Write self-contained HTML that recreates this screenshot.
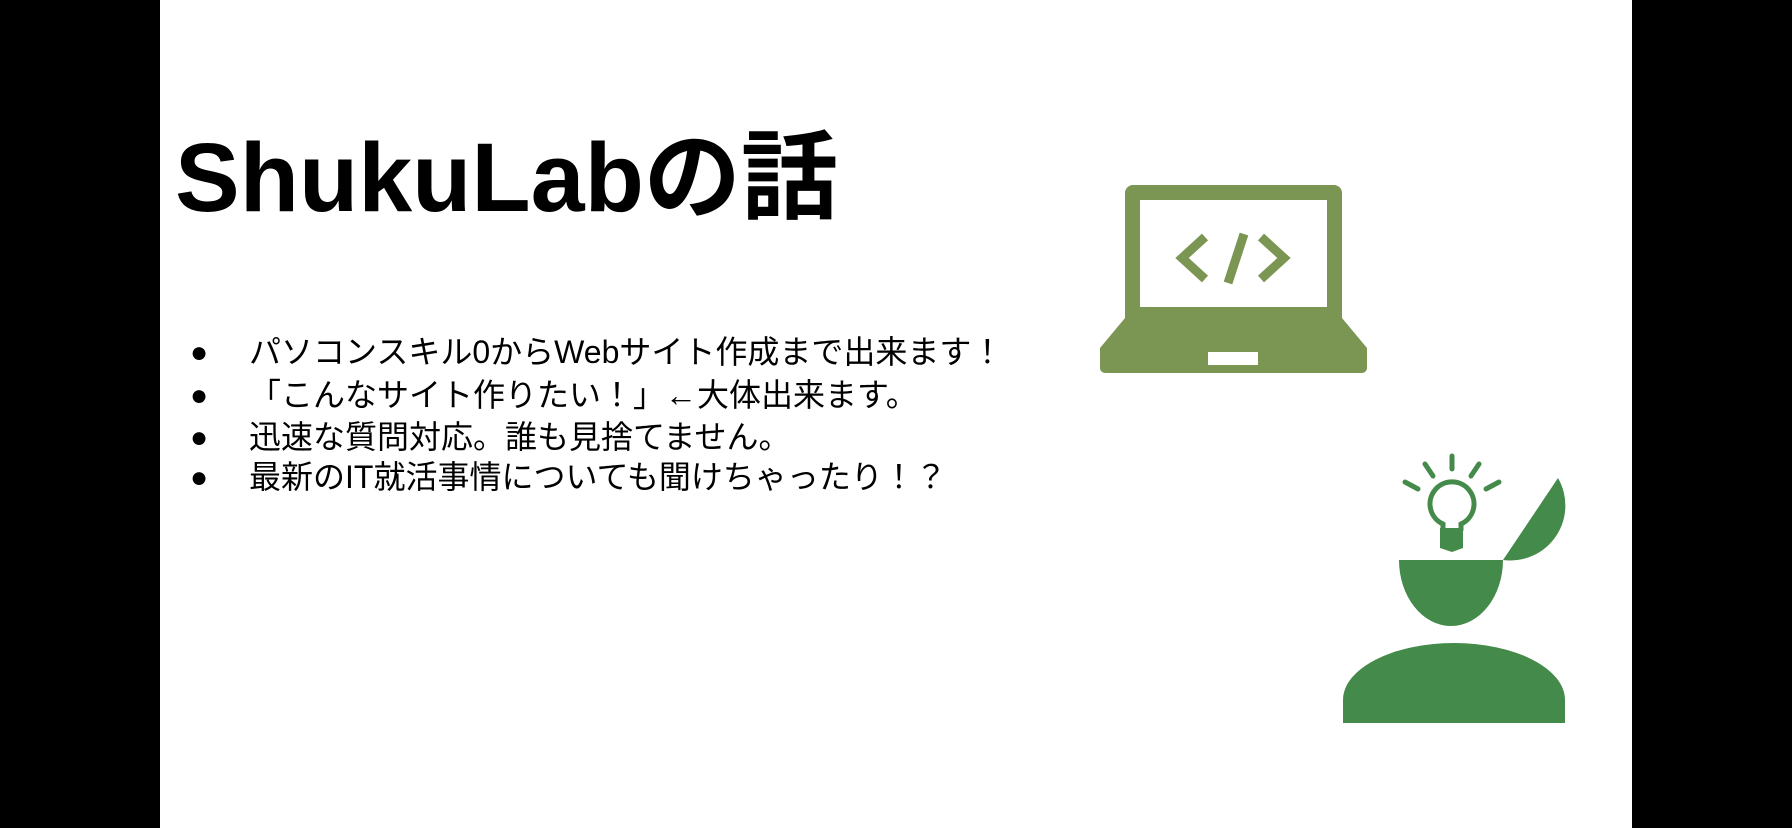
<!DOCTYPE html>
<html><head><meta charset="utf-8"><style>
html,body{margin:0;padding:0;width:1792px;height:828px;overflow:hidden;background:#000;}
#s{position:absolute;left:160px;top:0;width:1472px;height:828px;background:#fff;}
h1{position:absolute;left:175px;top:129px;margin:0;font:bold 97px/1 "Liberation Sans","Noto Sans CJK JP",sans-serif;color:#000;}
.b{position:absolute;left:190px;font:32px/1 "Liberation Sans","Noto Sans CJK JP",sans-serif;color:#000;white-space:nowrap;}
.b span{display:inline-block;width:59px;font-size:30px;vertical-align:1px;}
svg{position:absolute;left:0;top:0;}
</style></head><body>
<div id="s"></div>
<h1>ShukuLabの話</h1>
<div class="b" style="top:336px"><span>●</span>パソコンスキル0からWebサイト作成まで出来ます！</div>
<div class="b" style="top:379px"><span>●</span>「こんなサイト作りたい！」←大体出来ます。</div>
<div class="b" style="top:421px"><span>●</span>迅速な質問対応。誰も見捨てません。</div>
<div class="b" style="top:461px"><span>●</span>最新のIT就活事情についても聞けちゃったり！？</div>
<svg width="1792" height="828">
<g fill="#7a9652">
<path d="M1133 185h201a8 8 0 0 1 8 8v127H1125V193a8 8 0 0 1 8-8zM1140 200v107h187V200z" fill-rule="evenodd"/>
<path d="M1125 318h217l25 30v20a5 5 0 0 1-5 5H1105a5 5 0 0 1-5-5v-20zM1208 352v13h50v-13z" fill-rule="evenodd"/>
</g>
<g fill="none" stroke="#7a9652" stroke-width="9">
<path d="M1205 237L1182 258L1205 279"/>
<path d="M1244 234L1228 283"/>
<path d="M1261 237L1284 258L1261 279"/>
</g>
<g fill="#448a4b">
<path d="M1343 723V700a111 57 0 0 1 222 0v23z"/>
<path d="M1399 560h104a52 66 0 0 1-104 0z"/>
<path d="M1503 560L1558 478A55 55 0 0 1 1503 560z"/>
<path d="M1440 528h23v20l-11 4l-12-4z"/>
</g>
<g fill="none" stroke="#448a4b" stroke-width="5" stroke-linecap="round">
<path d="M1443 530v-6a22 22 0 1 1 18 0v6"/>
<path d="M1452 456v13M1425 464l8 12M1405 482l13 7M1479 464l-8 12M1499 482l-13 7"/>
</g>
</svg>
</body></html>
